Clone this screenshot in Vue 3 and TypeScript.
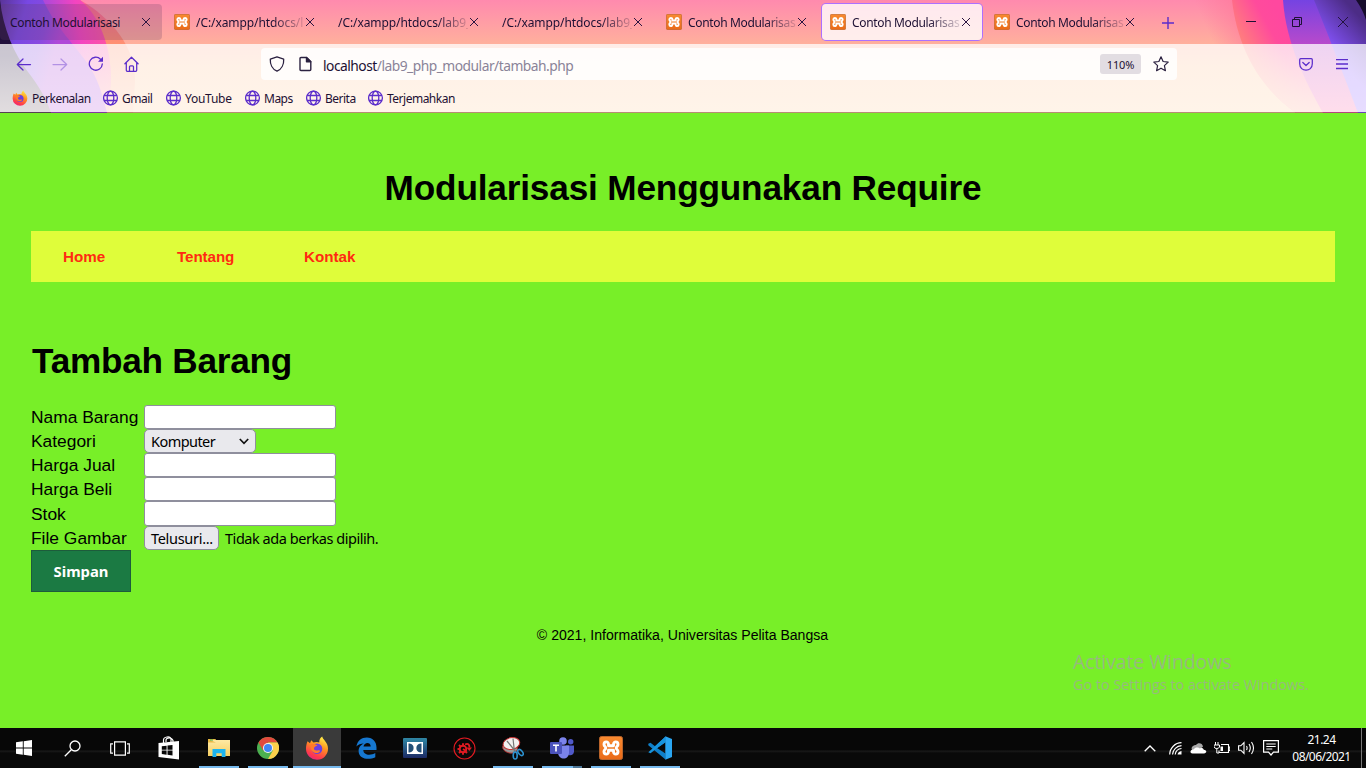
<script setup lang="ts">
import { ref } from 'vue'

interface Tab { title: string; icon: boolean; state: 'faded' | 'plain' | 'active'; kind: 'short' | 'path' | 'doc' }

const tabs: Tab[] = [
  { title: 'Contoh Modularisasi', icon: false, state: 'faded', kind: 'short' },
  { title: '/C:/xampp/htdocs/l', icon: true, state: 'plain', kind: 'path' },
  { title: '/C:/xampp/htdocs/lab9_', icon: false, state: 'plain', kind: 'path' },
  { title: '/C:/xampp/htdocs/lab9_', icon: false, state: 'plain', kind: 'path' },
  { title: 'Contoh Modularisas', icon: true, state: 'plain', kind: 'doc' },
  { title: 'Contoh Modularisas', icon: true, state: 'active', kind: 'doc' },
  { title: 'Contoh Modularisas', icon: true, state: 'plain', kind: 'doc' },
]
const bookmarks = ['Perkenalan', 'Gmail', 'YouTube', 'Maps', 'Berita', 'Terjemahkan']
const nama = ref('')
const jual = ref('')
const beli = ref('')
const stok = ref('')
</script>

<template>
  <div class="screen">
    <svg class="defs" width="0" height="0" aria-hidden="true">
      <defs>
        <linearGradient id="gOrange" x1="0" y1="0" x2="0" y2="1"><stop offset="0" stop-color="#f88a30" /><stop offset="1" stop-color="#ea6a18" /></linearGradient>
        <linearGradient id="gFox" x1=".75" y1="0" x2=".3" y2="1"><stop offset="0" stop-color="#fff14a" /><stop offset=".4" stop-color="#ff9420" /><stop offset=".8" stop-color="#ff3a4c" /><stop offset="1" stop-color="#e8267c" /></linearGradient>
        <linearGradient id="gFolder" x1="0" y1="0" x2="0" y2="1"><stop offset="0" stop-color="#ffe9a3" /><stop offset="1" stop-color="#f6cf62" /></linearGradient>
        <linearGradient id="gDolby" x1="0" y1="0" x2="0" y2="1"><stop offset="0" stop-color="#2f87a4" /><stop offset="1" stop-color="#1c2a64" /></linearGradient>
      </defs>
      <symbol id="xampp" viewBox="0 0 24 24">
        <rect x=".5" y=".5" width="23" height="23" rx="2" fill="url(#gOrange)" stroke="#b9642a" />
        <path d="M12 9.800H9.500V8.300C9.500 5 5 5.200 5 8.400 5 10.500 6.800 10.500 6.800 12S5 13.500 5 15.600C5 18.800 9.500 19 9.500 15.700V14.200h5v1.500c0 3.300 4.500 3.100 4.500-.1 0-2.100-1.800-2.100-1.800-3.600S19 10.500 19 8.400C19 5.200 14.500 5 14.500 8.300v1.500z" fill="none" stroke="#fff" stroke-width="2.900" stroke-linejoin="round" />
      </symbol>
      <symbol id="firefox" viewBox="0 0 24 24">
        <path d="M2.600 5.200 5 7.200 6.200 4.200 8.500 6.600C10.500 5.600 13 5.800 14.300 6.600 14 4 15.500 1.500 17.200.6c.3 2.800 5.800 5.700 5.800 12A11 11 0 0 1 1 13c0-3 .6-6 1.600-7.800z" fill="url(#gFox)" />
        <circle cx="12" cy="12.800" r="5.300" fill="#6a3fe0" />
        <path d="M5.800 8.500c2.500-1 5-.4 6.700 1.200-1.500.2-3.200 1-3.500 2.600-.2 1.600 1.600 2.600 3.400 2.200 1.600-.4 2.700-.2 2.800.5-1 2.500-6.200 3-8.300-.3-1.200-2-1.700-4.200-1.100-6.200z" fill="#ff7a2a" />
      </symbol>
      <symbol id="globe" viewBox="0 0 16 16">
        <g fill="none" stroke="#5b2dcb" stroke-width="1.300"><circle cx="7.500" cy="8" r="6.900" /><ellipse cx="7.500" cy="8" rx="3.300" ry="6.900" /><path d="M1 5.500h13M1 10.500h13" /></g>
      </symbol>
    </svg>

    <header class="browser">
      <svg class="theme" width="1366" height="113" viewBox="0 0 1366 113" aria-hidden="true">
        <defs>
          <linearGradient id="bg" x1="0" y1="0" x2="0" y2="1"><stop offset="0" stop-color="#ff8aae" /><stop offset=".4" stop-color="#ffb19c" /><stop offset=".6" stop-color="#ffc294" /><stop offset="1" stop-color="#ffc892" /></linearGradient>
          <linearGradient id="orL" x1="0" y1="0" x2="0" y2="1"><stop offset="0" stop-color="#ff5f9a" /><stop offset=".4" stop-color="#ff9270" /><stop offset="1" stop-color="#ffb987" /></linearGradient>
          <linearGradient id="pinkL" gradientUnits="userSpaceOnUse" x1="50" y1="30" x2="115" y2="20"><stop offset="0" stop-color="#b048d8" /><stop offset=".45" stop-color="#f444c0" /><stop offset="1" stop-color="#ff5a98" /></linearGradient>
          <linearGradient id="purL" gradientUnits="userSpaceOnUse" x1="0" y1="0" x2="65" y2="20"><stop offset="0" stop-color="#5a3498" /><stop offset=".4" stop-color="#7848e4" /><stop offset=".75" stop-color="#8a4ae0" /><stop offset="1" stop-color="#b048d8" /></linearGradient>
          <linearGradient id="darkL" x1="0" y1="0" x2="0" y2="1"><stop offset="0" stop-color="#21103c" /><stop offset=".5" stop-color="#21103c" /><stop offset="1" stop-color="#6b5560" /></linearGradient>
          <linearGradient id="glowR" gradientUnits="userSpaceOnUse" x1="1205" y1="25" x2="1250" y2="5"><stop offset="0" stop-color="#ff7a9c" stop-opacity="0" /><stop offset="1" stop-color="#ff7a9c" /></linearGradient>
          <linearGradient id="pinkR" gradientUnits="userSpaceOnUse" x1="1235" y1="40" x2="1280" y2="15"><stop offset="0" stop-color="#ff8678" /><stop offset=".7" stop-color="#ff4b9c" /><stop offset="1" stop-color="#ff489f" /></linearGradient>
          <linearGradient id="purR" x1="0" y1="0" x2="0" y2="1"><stop offset="0" stop-color="#7543e2" /><stop offset=".4" stop-color="#b94acb" /><stop offset="1" stop-color="#ff58a0" /></linearGradient>
          <linearGradient id="bluR" gradientUnits="userSpaceOnUse" x1="1325" y1="45" x2="1358" y2="15"><stop offset="0" stop-color="#8755ff" /><stop offset="1" stop-color="#4c2c86" /></linearGradient>
          <linearGradient id="pinkFade" x1="0" y1="0" x2="0" y2="1"><stop offset=".4" stop-color="#ffb08c" stop-opacity="0" /><stop offset="1" stop-color="#ffb08c" stop-opacity=".9" /></linearGradient>
        </defs>
        <rect width="1366" height="113" fill="url(#bg)" />
        <path d="M0 0H80C112 18 136 48 135 82L133 113H0z" fill="url(#orL)" />
        <path d="M0 0H80C100 16 111 47 111 80L108 113H0z" fill="url(#pinkL)" />
        <path d="M0 0H80C100 16 111 47 111 80L108 113H0z" fill="url(#pinkFade)" />
        <path d="M0 0H43C56 28 75 45 88 64 98 79 103 96 107 113H0z" fill="url(#purL)" />
        <path d="M0 0C3 28 14 54 28 72 39 86 47 100 51 113H0z" fill="url(#darkL)" />
        <path d="M1180 0H1245V44H1180z" fill="url(#glowR)" />
        <path d="M1232 0C1238 52 1262 89 1296 113H1366V0z" fill="url(#pinkR)" />
        <path d="M1232 0C1238 52 1262 89 1296 113H1366V0z" fill="url(#pinkFade)" />
        <path d="M1283 0C1286 43 1305 81 1323 113H1366V0z" fill="url(#purR)" />
        <path d="M1314 0C1325 27 1344 75 1358 113H1366V0z" fill="url(#bluR)" />
        <path d="M1356 0Q1363 10 1366 20V0z" fill="#160c2b" />
        <path d="M0 112h1366v1H0z" fill="#30203c" fill-opacity=".35" />
      </svg>

      <div class="tabbar">
        <div v-for="(t, i) in tabs" :key="i" class="tab" :class="[t.state, t.kind]">
          <svg v-if="t.icon" class="fav" width="16" height="16"><use href="#xampp" /></svg>
          <span class="title" :class="{ clip: t.kind !== 'short' }">{{ t.title }}</span>
          <svg class="close" width="10" height="10" viewBox="0 0 10 10"><path d="M1 1l8 8M9 1 1 9" stroke="#2b1440" stroke-width="1" /></svg>
        </div>
        <svg class="plus" width="12" height="12" viewBox="0 0 12 12"><path d="M6 0v12M0 6h12" stroke="#5b2dcb" stroke-width="1.400" /></svg>
        <div class="winctl">
          <svg width="10" height="10" viewBox="0 0 10 10"><path d="M0 4.500h10" stroke="#1d1033" /></svg>
          <svg width="10" height="10" viewBox="0 0 10 10" fill="none" stroke="#1d1033"><path d="M.5 2.500h7v7h-7zM2.500 2.500v-2h7v7h-2" /></svg>
          <svg width="10" height="10" viewBox="0 0 10 10"><path d="M0 0l10 10M10 0 0 10" stroke="#1d1033" stroke-width=".9" /></svg>
        </div>
      </div>

      <div class="chrome">
        <div class="toolbar">
          <div class="navicons">
            <svg width="16" height="16" viewBox="0 0 16 16" fill="none" stroke="#5b2dcb" stroke-width="1.250" stroke-linecap="round" stroke-linejoin="round"><path d="M14.500 8.500H1.500M7 3 1.300 8.500 7 14" /></svg>
            <svg class="dim" width="16" height="16" viewBox="0 0 16 16" fill="none" stroke="#5b2dcb" stroke-width="1.250" stroke-linecap="round" stroke-linejoin="round"><path d="M1 8.500h13.500M9 3 14.700 8.500 9 14" /></svg>
            <svg width="16" height="16" viewBox="0 0 16 16" fill="none" stroke="#5b2dcb" stroke-width="1.300"><path d="M12.500 3.200A6.500 6.500 0 1 0 14.300 8" stroke-linecap="round" /><path d="M15 .8v5h-5z" fill="#5b2dcb" stroke="none" /></svg>
            <svg width="16" height="16" viewBox="0 0 16 16" fill="none" stroke="#5b2dcb" stroke-width="1.250" stroke-linejoin="round" stroke-linecap="round"><path d="M.9 7.800 7.500 1.200l6.600 6.600M2.300 6.500V14.300q0 1 1 1h8.400q1 0 1-1V6.500M5.500 15.300v-4.500q0-1 1-1h2q1 0 1 1v4.500" /></svg>
          </div>
          <div class="urlbar">
            <svg width="16" height="16" viewBox="0 0 16 16" fill="none" stroke="#2b2140" stroke-width="1.300" stroke-linejoin="round"><path d="M8 .8 14.700 3.200C15 8.500 12.500 13.500 8 15.200 3.500 13.500 1 8.500 1.300 3.200z" /></svg>
            <svg class="page-ic" width="13" height="16" viewBox="0 0 13 16" fill="none" stroke="#2b2140" stroke-width="1.400" stroke-linejoin="round"><path d="M2 1.500h5.500L11.800 5.800V13.500q0 1-1 1H2q-1 0-1-1v-11q0-1 1-1z" /><path d="M7.500 1.500v4.300h4.300z" fill="#2b2140" /></svg>
            <span class="url"><b>localhost</b>/lab9_php_modular/tambah.php</span>
            <span class="zoom">110%</span>
            <svg class="star" width="16" height="16" viewBox="0 0 16 16" fill="none" stroke="#2b2140" stroke-width="1.200" stroke-linejoin="round"><path d="M8 .8 10.100 5.500l5.100.6-3.800 3.500 1 5.100L8 12.200l-4.400 2.500 1-5.100L.8 6.100l5.100-.6z" /></svg>
          </div>
          <div class="right-ic">
            <svg width="14" height="13" viewBox="0 0 14 13" fill="none" stroke="#5b2dcb" stroke-width="1.250" stroke-linecap="round" stroke-linejoin="round"><path d="M1.700.7h10.600q1 0 1 1v4c0 8.700-12.600 8.700-12.600 0v-4q0-1 1-1zM3.800 4.500 7 7.500l3.200-3" /></svg>
            <svg width="12" height="11" viewBox="0 0 12 11"><path d="M0 .5h12M0 5h12M0 9.500h12" stroke="#5b2dcb" stroke-width="1.300" /></svg>
          </div>
        </div>
        <div class="bookmarks">
          <span v-for="(b, i) in bookmarks" :key="b" class="bm" :class="'bm-' + b.toLowerCase()">
            <svg width="16" height="16"><use :href="i ? '#globe' : '#firefox'" /></svg><span>{{ b }}</span>
          </span>
        </div>
      </div>
    </header>

    <main class="page">
      <h1 class="site-title"><span>Modularisasi Menggunakan Require</span></h1>
      <nav class="menu"><a class="home">Home</a><a class="tentang">Tentang</a><a>Kontak</a></nav>
      <h1 class="form-title">Tambah Barang</h1>
      <form class="form" @submit.prevent>
        <label class="row"><span>Nama Barang</span><input v-model="nama" type="text" /></label>
        <div class="row kategori"><span>Kategori</span><div class="select">Komputer<svg width="10" height="7" viewBox="0 0 10 7" fill="none" stroke="#111" stroke-width="1.700"><path d="M.8 1 5 5.300 9.200 1" /></svg></div></div>
        <label class="row jual"><span>Harga Jual</span><input v-model="jual" type="text" /></label>
        <label class="row beli"><span>Harga Beli</span><input v-model="beli" type="text" /></label>
        <label class="row stok"><span>Stok</span><input v-model="stok" type="text" /></label>
        <div class="row file"><span>File Gambar</span><div class="browse">Telusuri...</div><em>Tidak ada berkas dipilih.</em></div>
        <button class="save" type="submit">Simpan</button>
      </form>
      <footer class="foot"><span>© 2021, Informatika, Universitas Pelita Bangsa</span></footer>
      <aside class="watermark"><p>Activate Windows</p><small>Go to Settings to activate Windows.</small></aside>
    </main>

    <div class="taskbar">
      <div class="cell"><svg width="16" height="16" viewBox="0 0 16 16" fill="#fff"><path d="M0 2.300 6.800 1.300V7.600H0zM7.700 1.200 16 0v7.600H7.700zM0 8.400h6.800v6.300L0 13.700zM7.700 8.400H16V16l-8.300-1.200z" /></svg></div>
      <div class="cell"><svg width="17" height="17" viewBox="0 0 17 17" fill="none" stroke="#fff" stroke-width="1.300"><circle cx="11" cy="6" r="5" /><path d="M7.300 9.700.8 16.200" /></svg></div>
      <div class="cell"><svg width="20" height="15" viewBox="0 0 20 15" fill="none" stroke="#fff" stroke-width="1.200"><path d="M4.600.8h10.800v13.400H4.600zM3 2.800H.7v9.400H3M17 2.800h2.300v9.400H17" /></svg></div>
      <div class="cell"><svg width="22" height="24" viewBox="0 0 22 24"><path d="M5.500 7V4q0-2.500 3.500-3t4 2v3M8 6V4q0-1.800 3-2t4 2.500V6" fill="none" stroke="#fff" stroke-width="1.200" /><path d="M.5 7 21 5v18.500L.5 21z" fill="#fff" /><path d="M3.800 10.300 8.600 9.700v4H3.800zM9.500 9.600 14.500 9v4.700h-5zM3.800 14.600h4.800v4.100l-4.800-.6zM9.500 14.600h5v5l-5-.8z" fill="#080808" /></svg></div>
      <div class="cell open"><svg width="22" height="20" viewBox="0 0 22 20"><path d="M0 1h7.500l1 2H21v15H0z" fill="#e8b843" /><path d="M1.500 2H22v16H0V4.500h8z" fill="url(#gFolder)" /><path d="M4.500 11h13v8h-3.800v-3.800H8.300V19H4.500z" fill="#1db4ef" /><path d="M2 2h3" stroke="#3fae4c" /></svg></div>
      <div class="cell open"><svg width="22" height="22" viewBox="0 0 22 22"><circle cx="11" cy="11" r="11" fill="#4caf50" /><path d="M1.470 5.500A11 11 0 0 1 20.530 5.500H11L6.240 13.750z" fill="#e2493c" /><path d="M20.530 5.500A11 11 0 0 1 11 22l4.760-8.250L11 5.500z" fill="#fbd04b" /><circle cx="11" cy="11" r="5" fill="#f4f4f4" /><circle cx="11" cy="11" r="4" fill="#4285f4" /></svg></div>
      <div class="cell open current"><svg width="24" height="24"><use href="#firefox" /></svg></div>
      <div class="cell"><svg width="21" height="22" viewBox="0 0 21 22"><path d="M.4 9.500C1.500 3.500 5.500.5 10.800.5 17 .5 20.500 5 20.500 10.500v2.600H7.300c.2 5.500 7.500 5.700 12 3v4.200C12.500 23.500 2.600 22 2.600 14c0-4 2.300-6.200 5.200-7.600C5 6.500 2 7.500.4 9.500zM7.500 9.500h7.200c0-4.800-6.500-4.600-7.200 0z" fill="#1677cf" /></svg></div>
      <div class="cell"><svg width="24" height="20" viewBox="0 0 24 20"><rect width="24" height="20" rx="1" fill="url(#gDolby)" /><path d="M4 4h16v12H4z" fill="#fff" /><path d="M5.500 5.500h1c5.500 0 5.500 9 0 9h-1zM18.500 5.500h-1c-5.500 0-5.500 9 0 9h1z" fill="#245077" /></svg></div>
      <div class="cell"><svg width="23" height="23" viewBox="0 0 23 23" fill="none" stroke="#e01b22"><circle cx="11.500" cy="11.500" r="10.500" stroke-width="1.100" /><circle cx="10" cy="12" r="3.300" stroke-width="1.900" /><path d="M10 6.300v2M10 15.700v2M4.500 12h2M6 8l1.500 1.500M6 16l1.500-1.500M14 16l-1.500-1.500" stroke-width="1.900" /><path d="M10 12l3 2M12 7.500c3-1.500 4.500 0 4.500 3" stroke-width="1.800" /><path d="M13.500 10.500h5.500L16.300 14z" fill="#e01b22" stroke="none" /></svg></div>
      <div class="cell open"><svg width="22" height="23" viewBox="0 0 22 23"><ellipse cx="8" cy="11" rx="7.500" ry="5" fill="#999" stroke="#b72a2a" stroke-width=".8" transform="rotate(12 8 11)" /><ellipse cx="9.300" cy="6.600" rx="8.400" ry="5.800" fill="#f3f1f1" stroke="#c93434" transform="rotate(-12 9 6)" /><path d="M5 4l9 11M11 1.500 12.500 15" stroke="#777" stroke-width="1.200" /><g fill="none" stroke="#2c91cf" stroke-width="1.600"><ellipse cx="13.200" cy="18.500" rx="2" ry="3.500" /><ellipse cx="18.500" cy="15.500" rx="2" ry="3.500" transform="rotate(-40 18.500 15.500)" /></g></svg></div>
      <div class="cell open stacked"><svg width="24" height="22" viewBox="0 0 24 22"><circle cx="13" cy="4" r="3.800" fill="#7b83eb" /><circle cx="20.700" cy="4.800" r="2.700" fill="#5059c9" /><path d="M16 8.500h8v6c0 4-5 5-7 2z" fill="#5059c9" /><path d="M8 8.500h11v7c0 8-10.500 8-11 0z" fill="#7b83eb" /><rect y="5" width="12" height="12" rx="1" fill="#4b53bc" /><path d="M3 8.300h6M6 8.300v6.200" stroke="#fff" stroke-width="1.600" /></svg></div>
      <div class="cell open"><svg width="24" height="24"><use href="#xampp" /></svg></div>
      <div class="cell open"><svg width="24" height="24" viewBox="0 0 24 24"><path d="M17.500.5 7 10.200 2.500 6.700.3 7.800v1.500L17.500 23.500V17.500L9 12l8.500-5.800z" fill="#0f7fc9" /><path d="M.3 16.200 7 10.200 17.500.5V6.200L9 12.200 2.500 17.300z" fill="#1793dd" /><path d="M17.300.3 24 3v18l-6.700 2.700z" fill="#2aa6f2" /></svg></div>

      <div class="tray">
        <svg class="t-up" width="12" height="7" viewBox="0 0 12 7"><path d="M.7 6.300 6 1l5.300 5.300" fill="none" stroke="#fff" stroke-width="1.300" /></svg>
        <svg class="t-wifi" width="13" height="13" viewBox="0 0 13 13" fill="none" stroke="#fff" stroke-width="1.200"><path d="M.7 12.500A12 12 0 0 1 12.500.7M3.500 12.500A9.500 9.500 0 0 1 12.500 3.700M6.200 12.500a7 7 0 0 1 6.300-6" /><path d="M8.500 12.500Q9 9.500 12.500 9v3.500z" fill="#fff" stroke="none" /></svg>
        <svg class="t-cloud" width="17" height="11" viewBox="0 0 17 11"><path d="M2.500 7.500C-.5 4 4.500 1.500 6 2c2-3 6.500-2 7 1.500L9 7.500z" fill="#a8a8a8" /><path d="M2.500 10.500C-1 10 .5 6 3.500 6.500 5 3.800 8.500 4 10 5.500c1-.8 3.500-.5 3.700 1.200 3.800.3 3 3.800.3 3.800z" fill="#fff" /></svg>
        <svg class="t-bat" width="16" height="13" viewBox="0 0 16 13"><path d="M1.500 0v3M4 0v3M0 3h5.500v2Q5 6.500 2.800 6.500 .5 6.500 0 5zM2.800 6.500v4.500H5" fill="none" stroke="#fff" stroke-width="1" /><path d="M7 2.500h7.500v8H5V8.500M15 5h.8v3.500H15" fill="none" stroke="#fff" stroke-width="1.100" /><path d="M6.500 4.500H9v4.500H6.500z" fill="#fff" /></svg>
        <svg class="t-vol" width="17" height="14" viewBox="0 0 17 14" fill="none" stroke="#fff" stroke-width="1.100"><path d="M.6 4.800h2.200L6 1.500v11L2.800 9.200H.6zM8.500 5q1.200 2 0 4M11 3q2.600 4 0 8M13.500 1q4 6 0 12" /></svg>
        <svg class="t-note" width="16" height="16" viewBox="0 0 16 16" fill="none" stroke="#fff" stroke-width="1.200"><path d="M.6.600h14.800v11.500H10.500L8 15l-2.500-2.900H.6zM3.300 4h9.400M3.300 6.500h9.400M3.300 9h6" /></svg>
        <div class="clock"><span>21.24</span><span class="date">08/06/2021</span></div>
      </div>
    </div>
  </div>
</template>

<style>
body { margin: 0; overflow: hidden; }
</style>

<style scoped>
* { box-sizing: border-box; }
.screen { width: 1366px; height: 768px; display: flex; flex-direction: column; overflow: hidden; font-family: "Liberation Sans", Arial, sans-serif; }
.defs { position: absolute; }
svg { display: block; flex: none; }

.browser { position: relative; height: 113px; flex: none; font-family: "Noto Sans", "Open Sans", sans-serif; font-size: 12px; color: #1d1033; }
.theme { position: absolute; top: 0; left: 0; }
.tabbar { position: relative; height: 44px; display: flex; align-items: center; gap: 4px; }
.tab { height: 36px; width: 160px; display: flex; align-items: center; padding: 0 11px 0 8px; border-radius: 4px; white-space: nowrap; }
.tab.faded { width: 162px; padding-left: 10px; background: rgba(100, 62, 100, .24); }
.tab.active { background: rgba(255, 255, 255, .8); box-shadow: 0 0 0 1px #ac70ff; }
.fav { margin-right: 6px; }
.title { flex: 1; min-width: 0; padding-top: 1px; font-size: 12px; line-height: 18px; letter-spacing: -.34px; }
.title.clip { -webkit-mask-image: linear-gradient(to right, #000 calc(100% - 32px), rgba(0, 0, 0, .15)); mask-image: linear-gradient(to right, #000 calc(100% - 32px), rgba(0, 0, 0, .15)); }
.path .title { letter-spacing: -.08px; }
.close { margin-left: 1px; }
.plus { margin-left: 12px; margin-top: 1px; }
.winctl { display: flex; gap: 36px; margin-left: auto; padding-right: 18px; }

.chrome { position: relative; height: 68px; background: linear-gradient(rgba(255, 255, 255, .76), rgba(255, 255, 255, .8)); }
.toolbar { height: 40px; display: flex; align-items: center; }
.navicons { display: flex; gap: 20px; padding-left: 16px; }
.dim { opacity: .4; }
.urlbar { display: flex; align-items: center; width: 916px; height: 32px; margin-left: 121px; padding: 0 8px; border-radius: 4px; background: rgba(255, 255, 255, .82); }
.page-ic { margin-left: 14px; }
.url { margin-left: 11px; padding-top: 2px; font-size: 13.800px; color: #8a8398; letter-spacing: -.5px; }
.url b { font-weight: 400; color: #1d1033; }
.zoom { width: 41px; height: 20px; margin-left: auto; border-radius: 3px; background: #e2dde2; font-size: 11px; line-height: 22px; text-align: center; letter-spacing: -.1px; }
.star { margin-left: 12px; }
.right-ic { display: flex; align-items: center; gap: 23px; margin-left: auto; padding-right: 18px; }
.bookmarks { display: flex; align-items: center; height: 28px; padding-left: 12px; }
.bm { display: flex; align-items: center; gap: 3px; height: 28px; font-size: 12px; letter-spacing: -.5px; white-space: nowrap; flex: none; }
.bm > span { padding-top: 1px; }
.bm-perkenalan { width: 91px; gap: 4px; }
.bm-gmail { width: 63px; }
.bm-youtube { width: 79px; letter-spacing: -.25px; }
.bm-maps { width: 61px; }
.bm-berita { width: 62px; letter-spacing: -.5px; }

.page { position: relative; height: 615px; flex: none; padding: 0 31px; background: #78ef28; color: #000; }
.site-title { margin: 0; padding-top: 55px; height: 118px; font-size: 35.200px; letter-spacing: -.17px; line-height: 40px; text-align: center; }
.menu { height: 51px; padding-left: 32px; display: flex; align-items: center; background: #dffd3a; color: #ff2a12; font-size: 15.200px; font-weight: 700; }
.home { width: 114px; }
.tentang { width: 127px; letter-spacing: -.1px; }
.form-title { margin: 59px 0 0; height: 64px; padding-left: 1px; font-size: 35.200px; letter-spacing: -.25px; line-height: 40px; }
.row { display: flex; align-items: center; height: 24px; font-size: 17.400px; }
.row > span { width: 113px; flex: none; white-space: nowrap; }
.row.stok { height: 25px; }
.row.stok > span { padding-top: 1px; }
.row input { width: 192px; height: 24px; margin: 0; padding: 1px 4px; border: 1px solid #8f8f9d; border-radius: 3px; background: #fff; outline: none; }
.row.stok input { height: 25px; }
.select, .browse { height: 24px; display: flex; align-items: center; border: 1px solid #8f8f9d; border-radius: 5px; background: #e9e9ed; font: 14.500px/22px "Noto Sans", sans-serif; letter-spacing: -.55px; }
.select { width: 112px; justify-content: space-between; padding: 0 6px; }
.browse { width: 75px; padding-left: 6px; white-space: nowrap; letter-spacing: -.3px; }
.row em { margin-left: 6px; font: 14.500px/22px "Noto Sans", sans-serif; letter-spacing: -.46px; white-space: nowrap; }
.save { display: block; width: 100px; height: 42px; padding: 0; border: 1px solid #1d5c3c; background: #1b7a43; color: #fff; font: 700 14.800px/20px "Noto Sans", sans-serif; }
.foot { margin-top: 34px; padding-right: 1px; text-align: center; font-size: 14.080px; line-height: 18px; }
.watermark { position: absolute; left: 1073px; top: 537px; color: #98b880; font-family: "Open Sans", sans-serif; font-weight: 400; white-space: nowrap; }
.watermark p { margin: 0; font-size: 19.500px; line-height: 24px; letter-spacing: -.1px; }
.watermark small { display: block; margin-top: 1px; font-size: 14.400px; line-height: 20px; letter-spacing: 0; }

.taskbar { display: flex; height: 40px; flex: none; background: linear-gradient(#070707, #070707 22px, #1a1a1a 23px, #090909 25px); color: #fff; }
.cell { width: 48px; height: 40px; display: flex; align-items: center; justify-content: center; margin-right: 1px; }
.cell:nth-child(-n+3) { margin-right: 0; }
.cell:nth-child(4) { margin-right: 3px; }
.cell:nth-child(4) svg { margin-left: 2px; }
.open { position: relative; }
.open::after { content: ""; position: absolute; left: 4px; right: 4px; bottom: 0; height: 2px; background: #76b9ed; }
.current { background: #3a3a3a; }
.current::after { left: 0; right: 0; }
.stacked::after { background: linear-gradient(to right, #76b9ed 31px, #4d7696 31px); }
.tray { display: flex; align-items: center; margin-left: auto; border-right: 1px solid #777; margin-right: 4px; }
.t-wifi { margin-left: 13px; }
.t-cloud { margin-left: 8px; }
.t-bat { margin-left: 7px; }
.t-vol { margin-left: 8px; }
.t-note { margin-left: 8px; }
.clock { width: 81px; margin-left: 1px; display: flex; flex-direction: column; align-items: center; font: 12px/17px "Noto Sans", sans-serif; letter-spacing: -.55px; padding: 0 0 1px 2px; }
</style>
